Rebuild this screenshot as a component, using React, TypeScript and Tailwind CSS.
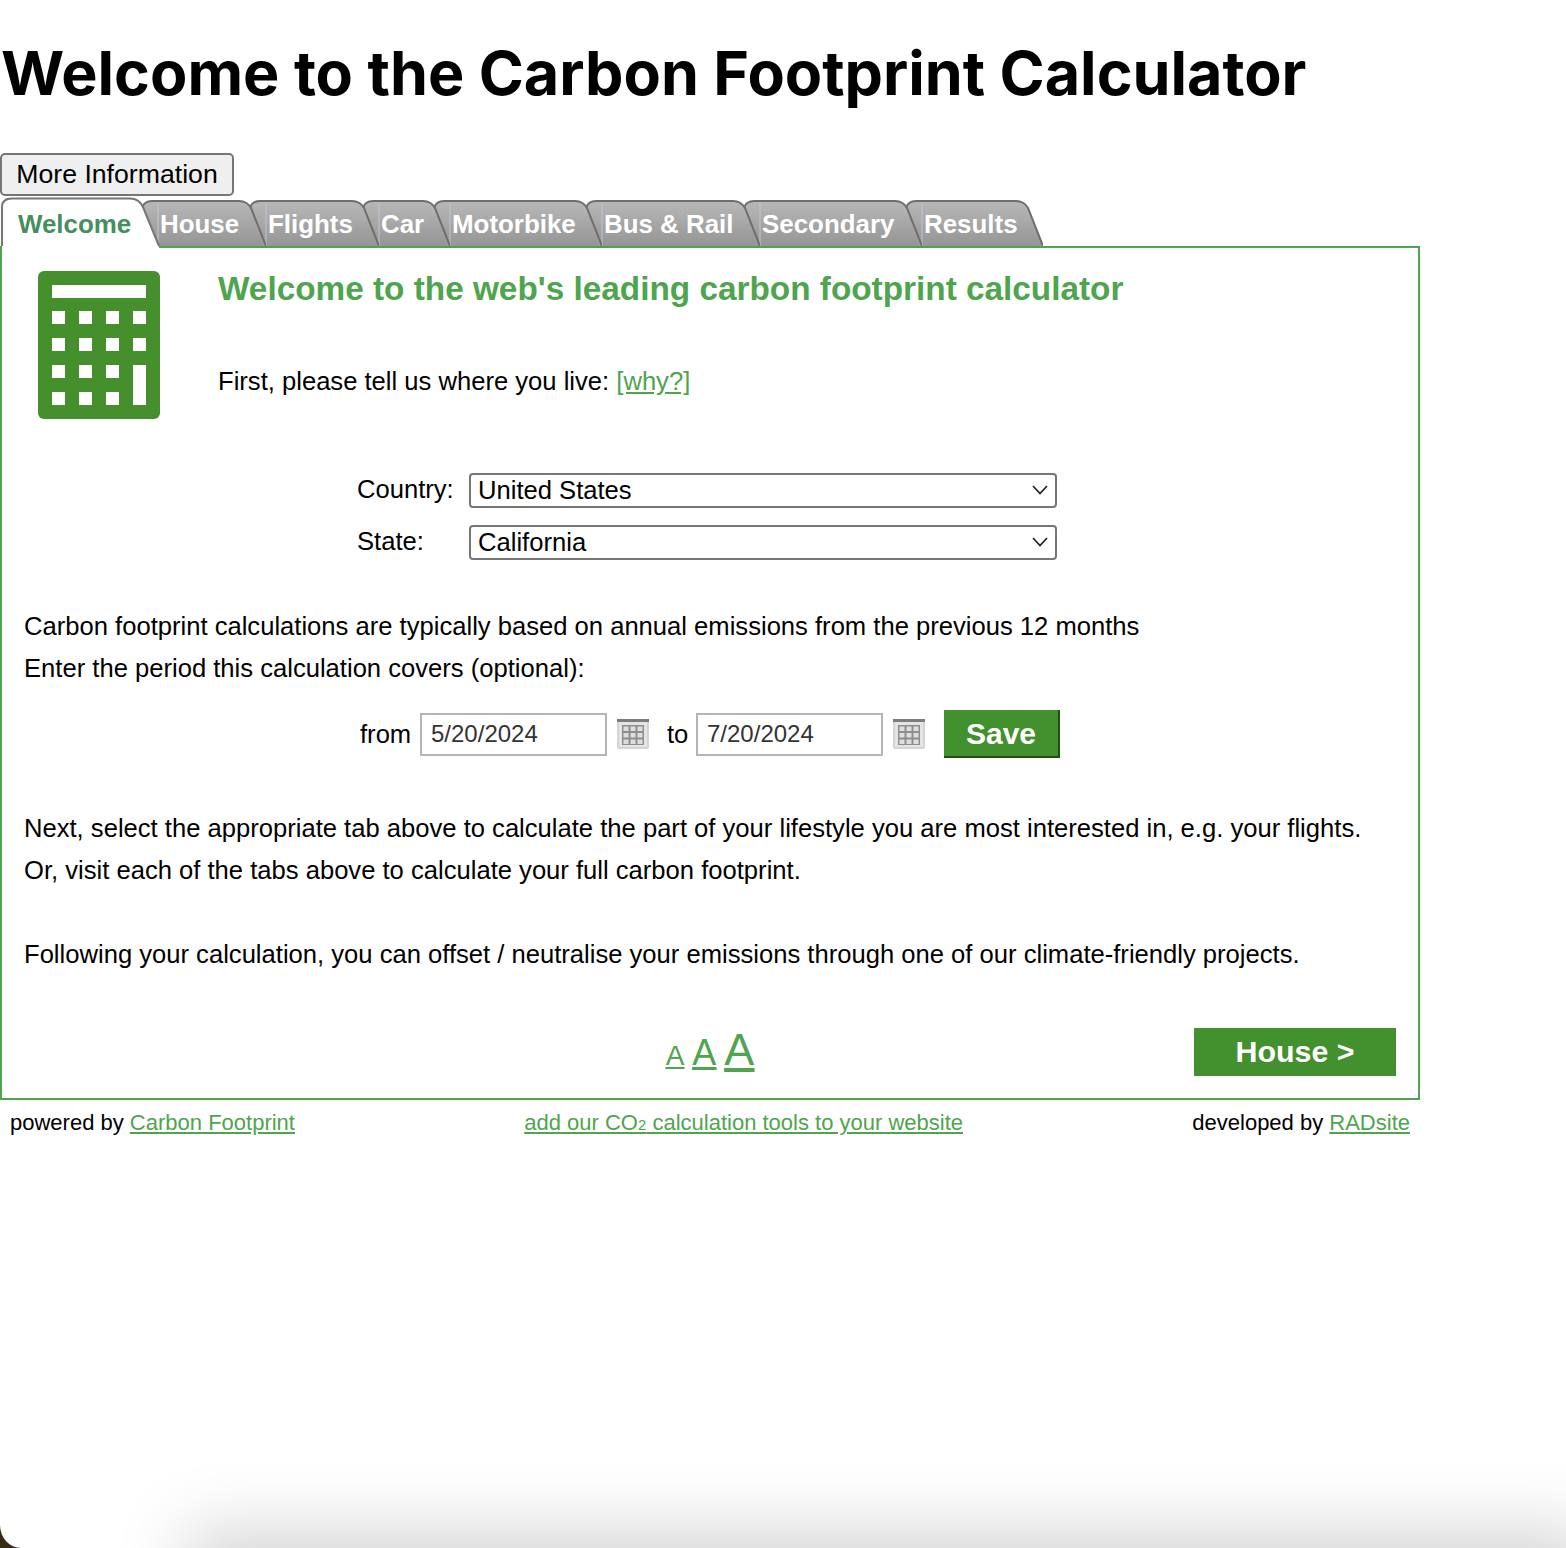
import { useId } from 'react'

const tabs = [
  { label: 'House', width: 108 },
  { label: 'Flights', width: 113 },
  { label: 'Car', width: 71 },
  { label: 'Motorbike', width: 152 },
  { label: 'Bus & Rail', width: 158 },
  { label: 'Secondary', width: 162 },
  { label: 'Results', width: 121 },
]

function GreyTab({ label, width, z }: { label: string; width: number; z: number }) {
  const id = useId()
  const r = width + 17
  return (
    <div className="relative h-full pl-[2px] pt-[10px] text-[25.9px] leading-[34px] font-bold text-white" style={{ width, zIndex: z }}>
      <svg className="absolute left-[-17px] top-0" width={r} height={49}>
        <defs>
          <linearGradient id={id} x1="0" y1="0" x2="0" y2="1">
            <stop offset="0" stopColor="#b8b8b8" />
            <stop offset="1" stopColor="#959595" />
          </linearGradient>
        </defs>
        <path d={`M17 49 L1 11 Q3 4 11 4 H${r - 27} Q${r - 19} 4 ${r - 15} 11 L${r} 49 Z`} fill={`url(#${id})`} />
        <line x1="17" y1="6" x2="17" y2="49" stroke="#c6c6c6" />
        <path d={`M1 11 Q3 4 11 4 H${r - 27} Q${r - 19} 4 ${r - 15} 11 L${r} 49`} fill="none" stroke="#6e6e6e" strokeWidth="2" />
      </svg>
      <span className="relative">{label}</span>
    </div>
  )
}

function CalendarIcon() {
  return (
    <svg width="32" height="30" viewBox="0 0 32 30" className="shrink-0">
      <rect x="0" y="0" width="32" height="30" rx="2" fill="#d4d4d4" />
      <rect x="0" y="0" width="32" height="3" fill="#7c7c7c" />
      <rect x="2" y="3" width="28" height="25" fill="#e4e4e4" />
      <rect x="5" y="6" width="22" height="20" fill="#8e8e8e" />
      {[6.5, 13.5, 20.5].map((x) =>
        [7.5, 14, 20.5].map((y) => <rect key={`${x}-${y}`} x={x} y={y} width="5" height="4.5" fill="#dedede" />),
      )}
    </svg>
  )
}

function CalculatorIcon() {
  const cols = [14, 41, 68, 95]
  const rows = [40, 67, 94, 121]
  return (
    <svg width="122" height="148" viewBox="0 0 122 148" className="shrink-0">
      <rect width="122" height="148" rx="6" fill="#458f2d" />
      <rect x="14" y="14" width="94" height="13" fill="#fff" />
      {rows.map((y, i) =>
        cols.map((x, j) => (i >= 2 && j === 3 ? null : <rect key={`${x}-${y}`} x={x} y={y} width="13" height="13" fill="#fff" />)),
      )}
      <rect x="95" y="94" width="13" height="40" fill="#fff" />
    </svg>
  )
}

function Chevron() {
  return (
    <svg className="absolute right-[8px] top-[11px]" width="18" height="12" viewBox="0 0 18 12" fill="none" stroke="#222" strokeWidth="1.7">
      <path d="M2 2 L9 9.5 L16 2" />
    </svg>
  )
}

function SelectRow({ label, value, className }: { label: string; value: string; className?: string }) {
  return (
    <div className={`ml-[333px] flex h-[35px] items-center ${className ?? ''}`}>
      <label className="w-[112px] pb-[2px] leading-[31px]">{label}</label>
      <div className="relative w-[588px]">
        <select
          defaultValue={value}
          className="block h-[35px] w-full appearance-none rounded-[4px] border-2 border-[#767676] bg-white pb-[2px] pl-[7px] leading-[28px] text-black"
        >
          <option>{value}</option>
        </select>
        <Chevron />
      </div>
    </div>
  )
}

function DateInput({ value }: { value: string }) {
  return (
    <input
      defaultValue={value}
      className="h-[43px] w-[187px] border-2 border-[#b5b5b5] bg-white px-[9px] text-[24px] text-[#333]"
    />
  )
}

export default function App() {
  return (
    <div className="relative h-[1548px] overflow-hidden bg-white font-['Liberation_Sans',Arial,sans-serif] text-[25.6px] text-black">
      <h1 className="pl-[1px] pt-[41px] pb-[48px] font-['Inter',sans-serif] text-[61px] leading-[64px] font-bold">
        Welcome to the Carbon Footprint Calculator
      </h1>

      <button className="block h-[43px] w-[234px] rounded-[5px] border-2 border-[#767676] bg-[#efefef] pb-[2px] text-center text-[26.67px] leading-[34px]">
        More Information
      </button>

      {/* Tabs */}
      <div className="relative mt-[1px] flex h-[49px]">
        <div className="relative z-20 h-full w-[158px] pl-[18px] pt-[10px] text-[25.9px] leading-[34px] font-bold text-[#458f5f]">
          <svg className="absolute left-0 top-0" width="160" height="51">
            <path d="M2 51 V10 Q2 1.5 12 1.5 H130 Q139 1.5 143 10 L159 49 V51 Z" fill="#fff" />
            <path d="M2 49 V10 Q2 1.5 12 1.5 H130 Q139 1.5 143 10 L159 49" fill="none" stroke="#767676" strokeWidth="2" />
          </svg>
          <span className="relative">Welcome</span>
        </div>
        {tabs.map((tab, i) => (
          <GreyTab key={tab.label} label={tab.label} width={tab.width} z={10 - i} />
        ))}
      </div>

      {/* Panel */}
      <div className="h-[854px] w-[1420px] border-2 border-[#4ea54e] px-[22px] pt-[23px]">
        <div className="flex">
          <div className="ml-[14px]">
            <CalculatorIcon />
          </div>
          <div className="ml-[58px]">
            <h2 className="text-[33.33px] leading-[36px] font-bold text-[#4ea54e]">
              Welcome to the web's leading carbon footprint calculator
            </h2>
            <p className="mt-[56px] leading-[36px]">
              First, please tell us where you live: <a className="text-[#4ea54e] underline">[why?]</a>
            </p>
          </div>
        </div>

        <SelectRow label="Country:" value="United States" className="mt-[54px]" />
        <SelectRow label="State:" value="California" className="mt-[17px]" />

        <div className="mt-[45px] leading-[42px]">
          <p>Carbon footprint calculations are typically based on annual emissions from the previous 12 months</p>
          <p>Enter the period this calculation covers (optional):</p>
        </div>

        <div className="mt-[21px] ml-[336px] flex h-[48px] items-center">
          <span className="w-[60px]">from</span>
          <DateInput value="5/20/2024" />
          <div className="ml-[10px]">
            <CalendarIcon />
          </div>
          <span className="ml-[18px] w-[29px]">to</span>
          <DateInput value="7/20/2024" />
          <div className="ml-[10px]">
            <CalendarIcon />
          </div>
          <button className="ml-[19px] h-[48px] w-[116px] border-r-2 border-b-2 border-[#234d17] bg-[#43902e] text-[30px] font-bold text-white">
            Save
          </button>
        </div>

        <div className="mt-[49px] leading-[42px]">
          <p>Next, select the appropriate tab above to calculate the part of your lifestyle you are most interested in, e.g. your flights.</p>
          <p>Or, visit each of the tabs above to calculate your full carbon footprint.</p>
        </div>

        <p className="mt-[42px] leading-[42px]">
          Following your calculation, you can offset / neutralise your emissions through one of our climate-friendly projects.
        </p>

        <div className="mt-[53px] grid h-[48px] grid-cols-3 items-center">
          <div />
          <div className="flex h-[48px] items-baseline justify-center gap-[8px] text-[#4ea54e] underline">
            <a className="text-[28px] leading-[44px]">A</a>
            <a className="text-[36px] leading-[44px]">A</a>
            <a className="text-[45px] leading-[44px]">A</a>
          </div>
          <div className="flex justify-end">
            <button className="h-[48px] w-[202px] bg-[#43902e] text-[30.4px] font-bold text-white">House &gt;</button>
          </div>
        </div>
      </div>

      {/* Footer */}
      <div className="mt-[8px] flex w-[1420px] justify-between px-[10px] text-[22px] leading-[30px]">
        <span>
          powered by <a className="text-[#4ea54e] underline">Carbon Footprint</a>
        </span>
        <a className="text-[#4ea54e] underline">
          add our CO<span className="text-[15px]">2</span> calculation tools to your website
        </a>
        <span>
          developed by <a className="text-[#4ea54e] underline">RADsite</a>
        </span>
      </div>

      {/* window shadow and corner at the bottom of the capture */}
      <div className="absolute left-[215px] right-0 top-[1560px] h-[60px] shadow-[0_0_70px_30px_rgba(0,0,0,0.17)]" />
      <svg className="absolute bottom-0 left-0" width="22" height="25" viewBox="0 0 22 25">
        <path d="M0 2 A21 23 0 0 0 21 25 H0 Z" fill="#3a2c12" />
      </svg>
    </div>
  )
}
